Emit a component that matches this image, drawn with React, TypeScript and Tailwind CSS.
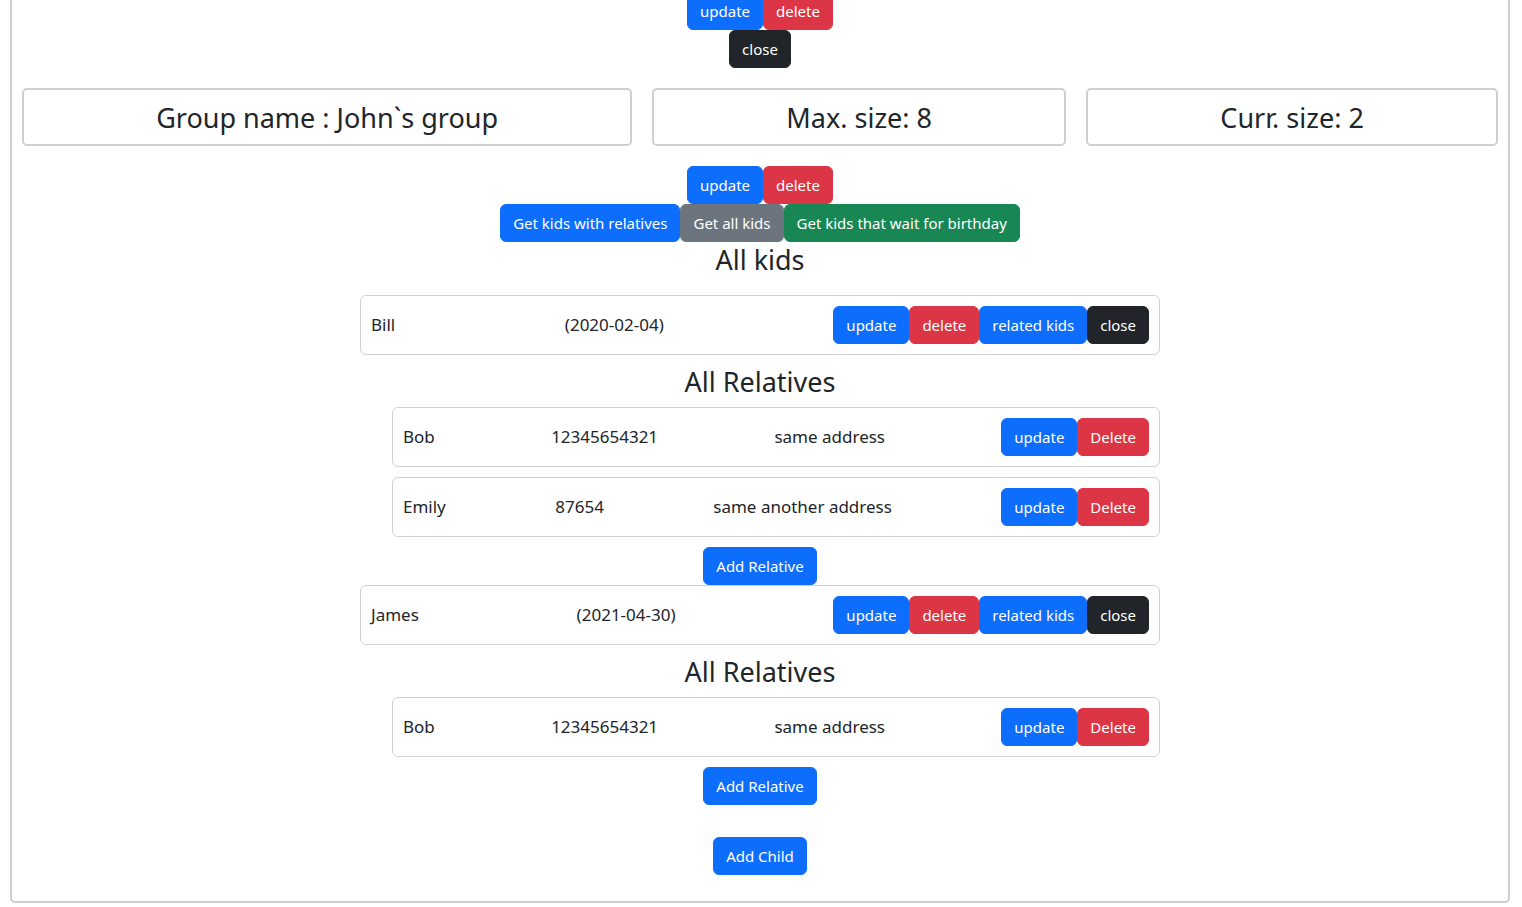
import React from "react"

type BtnProps = {
    color: "blue" | "red" | "dark" | "gray" | "green"
    children: React.ReactNode
}

const colors = {
    blue: "bg-[#0d6efd] border-[#0d6efd]",
    red: "bg-[#dc3545] border-[#dc3545]",
    dark: "bg-[#212529] border-[#212529]",
    gray: "bg-[#6c757d] border-[#6c757d]",
    green: "bg-[#198754] border-[#198754]",
}

const Btn = ({ color, children }: BtnProps) => (
    <button
        type="button"
        className={`h-[38px] rounded-[6px] border px-3 text-[15px] leading-6 text-white ${colors[color]}`}
    >
        {children}
    </button>
)

const Heading = ({ text, className }: { text: string; className?: string }) => (
    <h3 className={`h-[34px] pt-[2px] text-center text-[27px] leading-[32px] text-[#212529] ${className ?? ""}`}>{text}</h3>
)

type Relative = { name: string; phone: string; address: string }
type Kid = { name: string; birth: string; relatives: Relative[] }

const kids: Kid[] = [
    {
        name: "Bill",
        birth: "(2020-02-04)",
        relatives: [
            { name: "Bob", phone: "12345654321", address: "same address" },
            { name: "Emily", phone: "87654", address: "same another address" },
        ],
    },
    {
        name: "James",
        birth: "(2021-04-30)",
        relatives: [{ name: "Bob", phone: "12345654321", address: "same address" }],
    },
]

const KidBlock = ({ kid, first }: { kid: Kid; first: boolean }) => (
    <div className="flex w-[800px] flex-col">
        <div
            className={`flex h-[60px] items-center justify-between rounded-[6px] border border-[#d0d0d0] px-[10px] text-[17px] ${first ? "mt-[19px]" : ""}`}
        >
            <span>{kid.name}</span>
            <span>{kid.birth}</span>
            <div className="flex">
                <Btn color="blue">update</Btn>
                <Btn color="red">delete</Btn>
                <Btn color="blue">related kids</Btn>
                <Btn color="dark">close</Btn>
            </div>
        </div>
        <Heading text="All Relatives" className="mt-[9px]" />
        <div className="mt-[9px] flex flex-col gap-[10px] pl-8">
            {kid.relatives.map((r, i) => (
                <div
                    key={i}
                    className="flex h-[60px] items-center justify-between rounded-[6px] border border-[#d0d0d0] px-[10px] text-[17px]"
                >
                    <span>{r.name}</span>
                    <span>{r.phone}</span>
                    <span>{r.address}</span>
                    <div className="flex">
                        <Btn color="blue">update</Btn>
                        <Btn color="red">Delete</Btn>
                    </div>
                </div>
            ))}
        </div>
        <div className="mt-[10px] flex justify-center">
            <Btn color="blue">Add Relative</Btn>
        </div>
    </div>
)

export default function App() {
    return (
        <div
            className="h-[907px] overflow-hidden bg-white text-[16px] text-[#212529]"
            style={{ fontFamily: '"Noto Sans", "Liberation Sans", sans-serif' }}
        >
            <div className="mx-[10px] -mt-[8px] flex w-[1500px] flex-col items-center rounded-b-[5px] border-2 border-t-0 border-[#cfcfcf] pb-[26px]">
                <div className="flex">
                    <Btn color="blue">update</Btn>
                    <Btn color="red">delete</Btn>
                </div>
                <Btn color="dark">close</Btn>

                <div className="mt-[20px] flex w-full">
                    {["Group name : John`s group", "Max. size: 8", "Curr. size: 2"].map((t) => (
                        <div
                            key={t}
                            className="mx-[10px] flex h-[58px] flex-auto items-center justify-center rounded-[5px] border-2 border-[#cfcfcf] pt-[2px] text-[27px]"
                        >
                            {t}
                        </div>
                    ))}
                </div>

                <div className="mt-[20px] flex">
                    <Btn color="blue">update</Btn>
                    <Btn color="red">delete</Btn>
                </div>
                <div className="flex">
                    <Btn color="blue">Get kids with relatives</Btn>
                    <Btn color="gray">Get all kids</Btn>
                    <Btn color="green">Get kids that wait for birthday</Btn>
                </div>
                <Heading text="All kids" />

                {kids.map((k, i) => (
                    <KidBlock key={k.name} kid={k} first={i === 0} />
                ))}

                <div className="mt-[32px]">
                    <Btn color="blue">Add Child</Btn>
                </div>
            </div>
        </div>
    )
}
